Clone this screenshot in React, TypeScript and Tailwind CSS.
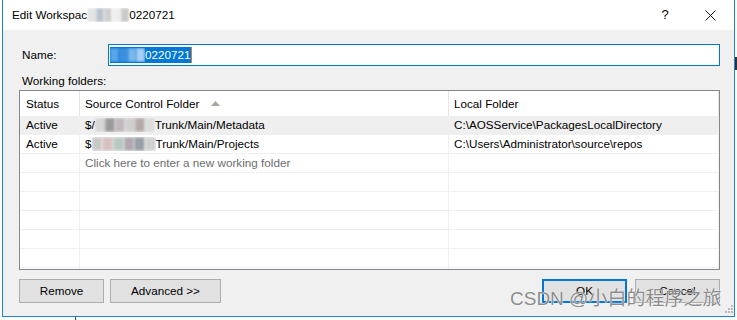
import React from 'react'

const FONT = '"Segoe UI", "Liberation Sans", "Noto Sans CJK SC", sans-serif'

function Smudge({ colors, className }: { colors: string[]; className: string }) {
  return (
    <span className={`inline-flex h-[14px] items-center overflow-hidden align-middle ${className}`}>
      {colors.map((c, i) => (
        <span key={i} className="h-full flex-1 blur-[1.5px]" style={{ backgroundColor: c }} />
      ))}
    </span>
  )
}

const rows = [
  {
    status: 'Active',
    prefix: '$/',
    smudge: ['#d6d6d6', '#9a9a9a', '#bfb7bc', '#cfcfcf', '#b5aaa8', '#dcdcdc'],
    path: 'Trunk/Main/Metadata',
    local: 'C:\\AOSService\\PackagesLocalDirectory',
    selected: true,
  },
  {
    status: 'Active',
    prefix: '$',
    smudge: ['#c9c9c9', '#d7c2bf', '#b9c9c2', '#b0a9b0', '#9aa0a8', '#d0d0d0'],
    path: 'Trunk/Main/Projects',
    local: 'C:\\Users\\Administrator\\source\\repos',
    selected: false,
  },
]

export default function App() {
  return (
    <div className="relative h-[320px] w-[737px] overflow-hidden bg-white text-[11.7px] text-black" style={{ fontFamily: FONT }}>
      <div className="ml-[2px] flex h-[317px] w-[733px] flex-col border-x border-b border-[#1883d7]">
        {/* title bar */}
        <div className="flex h-[30px] items-center bg-white pl-[9px]">
          <span className="flex items-center">
            Edit Workspac
            <Smudge colors={['#e4e4e4', '#b8c2cc', '#cfcfcf', '#eeeeee', '#c8c8c8']} className="w-[42px]" />
            0220721
          </span>
          <span className="ml-auto w-[20px] text-center text-[13px]">?</span>
          <svg className="ml-[30px] mr-[18px]" width="11" height="11" viewBox="0 0 11 11">
            <path d="M0.5 0.5L10.5 10.5M10.5 0.5L0.5 10.5" stroke="#111" strokeWidth="1" />
          </svg>
        </div>

        {/* body */}
        <div className="flex flex-1 flex-col bg-[#f0f0f0] pl-[16px] pr-[14px] pt-[14px]">
          <div className="flex h-[22px] items-center">
            <span className="w-[89px] pl-[3px]">Name:</span>
            <div className="flex h-[22px] flex-1 items-center border border-[#0078d7] bg-white pl-[1px]">
              <span className="flex h-[16px] items-center bg-[#0078d7] text-white">
                <Smudge colors={['#5aa6e6', '#3d8fde', '#7ab8ec', '#a9d0f3']} className="w-[35px]" />
                0220721
              </span>
              <span className="h-[16px] w-px bg-[#d9822b]" />
            </div>
          </div>

          <div className="flex h-[24px] items-center pl-[3px] pt-[6px]">Working folders:</div>

          {/* working folders grid */}
          <div className="flex h-[180px] flex-col overflow-hidden border border-[#828790] bg-white">
            <div className="grid h-[25px] shrink-0 grid-cols-[60px_369px_1fr]">
              <div className="flex items-center border-r border-[#e5e5e5] pl-[6px]">Status</div>
              <div className="flex items-center border-r border-[#e5e5e5] pl-[5px]">
                Source Control Folder
                <svg className="ml-[12px]" width="9" height="5" viewBox="0 0 9 5">
                  <path d="M4.5 0L9 5H0Z" fill="#a8a89a" />
                </svg>
              </div>
              <div className="flex items-center border-r border-[#e5e5e5] pl-[5px]">Local Folder</div>
            </div>

            {rows.map((r) => (
              <div
                key={r.path}
                className={`grid h-[19px] shrink-0 grid-cols-[60px_369px_1fr] border-b border-[#f0f0f0] ${r.selected ? 'bg-[#efefef]' : ''}`}
              >
                <div className="flex items-center border-r border-[#f0f0f0] pl-[6px]">{r.status}</div>
                <div className="flex items-center border-r border-[#f0f0f0] pl-[5px]">
                  {r.prefix}
                  <Smudge colors={r.smudge} className={r.prefix === '$/' ? 'w-[60px]' : 'w-[64px]'} />
                  <span>{r.path}</span>
                </div>
                <div className="flex items-center border-r border-[#f0f0f0] pl-[5px]">{r.local}</div>
              </div>
            ))}

            <div className="grid h-[19px] shrink-0 grid-cols-[60px_369px_1fr] border-b border-[#f0f0f0]">
              <div className="border-r border-[#f0f0f0]" />
              <div className="flex items-center border-r border-[#f0f0f0] pl-[5px] text-[#6d6d6d]">
                Click here to enter a new working folder
              </div>
              <div className="border-r border-[#f0f0f0]" />
            </div>

            {[0, 1, 2, 3, 4, 5].map((i) => (
              <div key={i} className="grid h-[19px] shrink-0 grid-cols-[60px_369px_1fr] border-b border-[#f0f0f0]">
                <div className="border-r border-[#f0f0f0]" />
                <div className="border-r border-[#f0f0f0]" />
                <div className="border-r border-[#f0f0f0]" />
              </div>
            ))}
          </div>

          {/* buttons */}
          <div className="mt-[9px] flex h-[24px]">
            <button className="w-[85px] border border-[#adadad] bg-[#e1e1e1]">Remove</button>
            <button className="ml-[6px] w-[111px] border border-[#adadad] bg-[#e1e1e1]">Advanced &gt;&gt;</button>
            <button className="ml-auto w-[85px] border-2 border-[#0078d7] bg-[#e1e1e1]">OK</button>
            <button className="ml-[8px] w-[85px] border border-[#adadad] bg-[#e1e1e1]">Cancel</button>
          </div>
        </div>
      </div>

      {/* resize grip */}
      <div className="absolute left-[725px] top-[305px] grid grid-cols-3 gap-[1px]">
        {[0, 1, 2, 3, 4, 5, 6, 7, 8].map((i) => (
          <span key={i} className={`h-[2px] w-[2px] ${i === 0 || i === 1 || i === 3 ? 'bg-transparent' : 'bg-[#b8b8b8]'}`} />
        ))}
      </div>

      {/* page behind the dialog */}
      <div className="absolute left-[735px] top-[57px] h-[13px] w-[2px] bg-[#333]" />
      <div className="absolute left-[75px] top-[317px] h-[3px] w-[170px] border-l border-[#444]" />

      {/* watermark */}
      <div
        className="absolute left-[510px] top-[289px] text-[19px] leading-[20px] text-[#8c8c8c]"
        style={{ fontFamily: '"Liberation Sans", "Noto Sans CJK SC", sans-serif', textShadow: '0 0 1px #fff, 0 0 1px #fff' }}
      >
        CSDN @小白的程序之旅
      </div>
    </div>
  )
}
